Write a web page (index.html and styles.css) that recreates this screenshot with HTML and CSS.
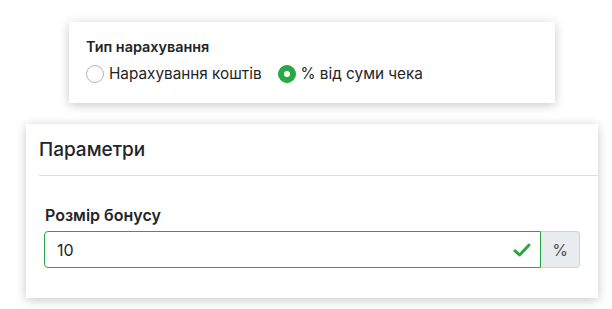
FILE: index.html
```html
<!DOCTYPE html>
<html lang="uk">
<head>
<meta charset="utf-8">
<link rel="stylesheet" href="styles.css">
</head>
<body>
<div class="page">
  <div class="card card-type">
    <div class="group-label">Тип нарахування</div>
    <div class="radios">
      <label class="radio">
        <span class="radio-dot"></span>
        <span class="radio-text">Нарахування коштів</span>
      </label>
      <label class="radio radio-on">
        <span class="radio-dot"></span>
        <span class="radio-text">% від суми чека</span>
      </label>
    </div>
  </div>

  <div class="card card-params">
    <div class="card-head">Параметри</div>
    <div class="card-body">
      <div class="field-label">Розмір бонусу</div>
      <div class="input-group">
        <div class="input valid">
          <span class="input-value">10</span>
          <svg class="check" viewBox="0 0 18 16" width="18" height="16" aria-hidden="true">
            <path d="M2 8.8 L6.6 13 L16 3" fill="none" stroke="#28a745" stroke-width="3" stroke-linecap="round" stroke-linejoin="round"/>
          </svg>
        </div>
        <div class="addon">%</div>
      </div>
    </div>
  </div>
</div>
</body>
</html>
```

FILE: styles.css
```css
* { box-sizing: border-box; }
html, body { margin: 0; padding: 0; background: #fff; }
body {
  font-family: Inter, "Noto Sans", "Liberation Sans", sans-serif;
  color: #212529;
  width: 612px;
  height: 309px;
  overflow: hidden;
}
.page {
  padding-top: 22px;
  display: flex;
  flex-direction: column;
}
.card {
  background: #fff;
  box-shadow: 0 2px 10px rgba(0, 0, 0, 0.22);
}
.card-type {
  margin-left: 69px;
  width: 486px;
  height: 81px;
  padding: 15px 18px 0 17px;
}
.group-label {
  font-size: 14.4px;
  font-weight: 600;
  line-height: 20px;
}
.radios {
  display: flex;
  align-items: center;
  gap: 16px;
  margin-top: 6px;
}
.radio {
  display: flex;
  align-items: center;
  gap: 5px;
  font-size: 15.3px;
  line-height: 22px;
}
.radio-dot {
  width: 18px;
  height: 18px;
  border-radius: 50%;
  border: 1px solid #adb5bd;
  background: #fff;
  flex: none;
}
.radio-on .radio-dot {
  background: #28a745;
  border-color: #28a745;
  display: flex;
  align-items: center;
  justify-content: center;
}
.radio-on .radio-dot::after {
  content: "";
  width: 6px;
  height: 6px;
  border-radius: 50%;
  background: #fff;
}
.card-params {
  margin-left: 26px;
  margin-top: 21px;
  width: 572px;
  height: 174px;
}
.card-head {
  margin-left: 13px;
  height: 52px;
  padding-top: 13px;
  font-size: 19px;
  font-weight: 500;
  line-height: 26px;
  border-bottom: 1px solid #dfdfdf;
}
.card-body {
  padding: 29px 18px 0 18px;
}
.field-label {
  font-size: 16px;
  font-weight: 600;
  line-height: 20px;
  padding-left: 1px;
}
.input-group {
  display: flex;
  margin-top: 6px;
  width: 536px;
  height: 37px;
}
.input {
  flex: 1;
  display: flex;
  align-items: center;
  justify-content: space-between;
  border: 1px solid #28a745;
  border-radius: 4px 0 0 4px;
  padding: 0 9px 0 12px;
  font-size: 16px;
}
.check { display: block; }
.addon {
  width: 39px;
  display: flex;
  align-items: center;
  justify-content: center;
  background: #e9ecef;
  border: 1px solid #ced4da;
  border-left: none;
  border-radius: 0 4px 4px 0;
  font-size: 16px;
  color: #495057;
}
```
